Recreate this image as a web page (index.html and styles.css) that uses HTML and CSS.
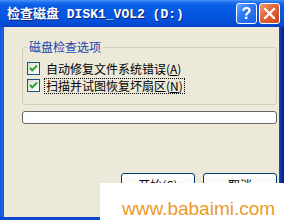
FILE: index.html
```html
<!DOCTYPE html>
<html lang="zh-CN">
<head>
<meta charset="utf-8">
<title>检查磁盘</title>
<link rel="stylesheet" href="styles.css">
</head>
<body>
<div class="window">
  <div class="titlebar">
    <span class="title">检查磁盘 DISK1_VOL2 (D:)</span>
    <div class="tbuttons">
      <div class="tbtn help">?</div>
      <div class="tbtn close">
        <svg width="13" height="13" viewBox="0 0 13 13"><path d="M2 2 L11 11 M11 2 L2 11" stroke="#fff" stroke-width="2.2" stroke-linecap="square"/></svg>
      </div>
    </div>
  </div>
  <div class="frame">
    <div class="bleft"></div>
    <div class="content">
      <fieldset class="group">
        <legend class="legend">磁盘检查选项</legend>
        <div class="row">
          <svg class="cb" width="13" height="13" viewBox="0 0 13 13">
            <defs><linearGradient id="g1" x1="0" y1="0" x2="1" y2="1"><stop offset="0" stop-color="#DCDCD6"/><stop offset="1" stop-color="#FFFFFF"/></linearGradient></defs>
            <rect x="0.5" y="0.5" width="12" height="12" fill="url(#g1)" stroke="#1C5180"/>
            <path d="M3 6 L5.2 8.4 L10 3.6" fill="none" stroke="#21A121" stroke-width="2"/>
          </svg>
          <span class="lbl">自动修复文件系统错误(<u>A</u>)</span>
        </div>
        <div class="row">
          <svg class="cb" width="13" height="13" viewBox="0 0 13 13">
            <defs><linearGradient id="g2" x1="0" y1="0" x2="1" y2="1"><stop offset="0" stop-color="#DCDCD6"/><stop offset="1" stop-color="#FFFFFF"/></linearGradient></defs>
            <rect x="0.5" y="0.5" width="12" height="12" fill="url(#g2)" stroke="#1C5180"/>
            <path d="M3 6 L5.2 8.4 L10 3.6" fill="none" stroke="#21A121" stroke-width="2"/>
          </svg>
          <span class="lbl focus">扫描并试图恢复坏扇区(<u>N</u>)</span>
        </div>
      </fieldset>
      <div class="progress"></div>
      <div class="buttons">
        <div class="btn">开始(<u>S</u>)</div>
        <div class="btn">取消</div>
      </div>
    </div>
    <div class="bright"></div>
  </div>
  <div class="bbottom"></div>
  <div class="watermark">www.babaimi.com</div>
</div>
</body>
</html>
```
FILE: styles.css
```css
html, body {
  margin: 0;
  padding: 0;
}
body {
  width: 284px;
  height: 220px;
  overflow: hidden;
  font-family: "Noto Sans CJK SC", "Liberation Sans", sans-serif;
  font-size: 12px;
}
.window {
  position: relative;
  width: 284px;
  height: 220px;
  display: flex;
  flex-direction: column;
  background: #ECE9D8;
}
.titlebar {
  height: 27px;
  flex: none;
  display: flex;
  align-items: center;
  justify-content: space-between;
  padding: 0 4px 0 7px;
  background: linear-gradient(#4A94F8 0, #2573EE 2px, #0A5FE6 5px, #0558E2 12px, #0553DD 20px, #0448D0 25px, #0A3FBE 27px);
}
.title {
  color: #fff;
  font-family: "Liberation Mono", "Noto Sans CJK SC", monospace;
  font-weight: bold;
  font-size: 13px;
  line-height: 16px;
  padding-top: 3px;
  text-shadow: 1px 1px 0 #0A1E78;
  white-space: nowrap;
}
.tbuttons {
  display: flex;
  gap: 2px;
}
.tbtn {
  width: 19px;
  height: 19px;
  border: 1px solid #fff;
  border-radius: 3px;
  display: flex;
  align-items: center;
  justify-content: center;
  color: #fff;
  font-family: "Liberation Sans", sans-serif;
  font-weight: bold;
  font-size: 16px;
  line-height: 19px;
}
.help {
  background: linear-gradient(135deg, #6AA5FF 0, #2F7AF6 40%, #1660E8 100%);
}
.close {
  background: linear-gradient(135deg, #F29B77 0, #E5683D 40%, #CC4315 100%);
}
.frame {
  flex: 1;
  display: flex;
}
.bleft {
  width: 4px;
  background: linear-gradient(90deg, #0A4FD8, #1F68EA 50%, #0A55DE);
}
.bright {
  width: 5px;
  background: linear-gradient(90deg, #1A4AC8, #0B2B9E 50%, #061A7A);
}
.bbottom {
  height: 3px;
  flex: none;
  background: #0A48D0;
}
.content {
  flex: 1;
  display: flex;
  flex-direction: column;
  padding: 14px 2px 0 18px;
  background: #ECE9D8;
}
.group {
  margin: 0;
  padding: 7px 0 10px 4px;
  border: 1px solid #D0D0BF;
  border-radius: 3px;
  min-width: 0;
}
.legend {
  padding: 0 2px;
  margin-left: 0;
  color: #1E40A8;
  font-size: 12px;
  line-height: 12px;
}
.row {
  height: 17px;
  display: flex;
  align-items: center;
  gap: 4px;
}
.cb {
  flex: none;
  display: block;
}
.lbl {
  border: 1px dotted transparent;
  padding: 0 1px;
  line-height: 14px;
  color: #000;
  white-space: nowrap;
}
.focus {
  border-color: #000;
}
.progress {
  margin-top: 6px;
  height: 11px;
  border: 1px solid #686868;
  border-radius: 3px;
  background: #fff;
}
.buttons {
  margin-top: 49px;
  display: flex;
  justify-content: flex-end;
  gap: 8px;
}
.btn {
  width: 72px;
  height: 21px;
  border: 1px solid #003C74;
  border-radius: 3px;
  background: linear-gradient(#FFFFFF 0, #F6F6F2 60%, #E3E0D6 90%, #D6D0C5 100%);
  display: flex;
  align-items: center;
  justify-content: center;
  font-size: 12px;
  line-height: 14px;
  color: #000;
}
.watermark {
  position: absolute;
  left: 100px;
  top: 183px;
  right: 0;
  bottom: 0;
  background: #fff;
  padding: 16px 0 0 22px;
  font-family: "Liberation Sans", sans-serif;
  font-size: 19px;
  line-height: 19px;
  color: #EB9A28;
  box-sizing: border-box;
}
```
